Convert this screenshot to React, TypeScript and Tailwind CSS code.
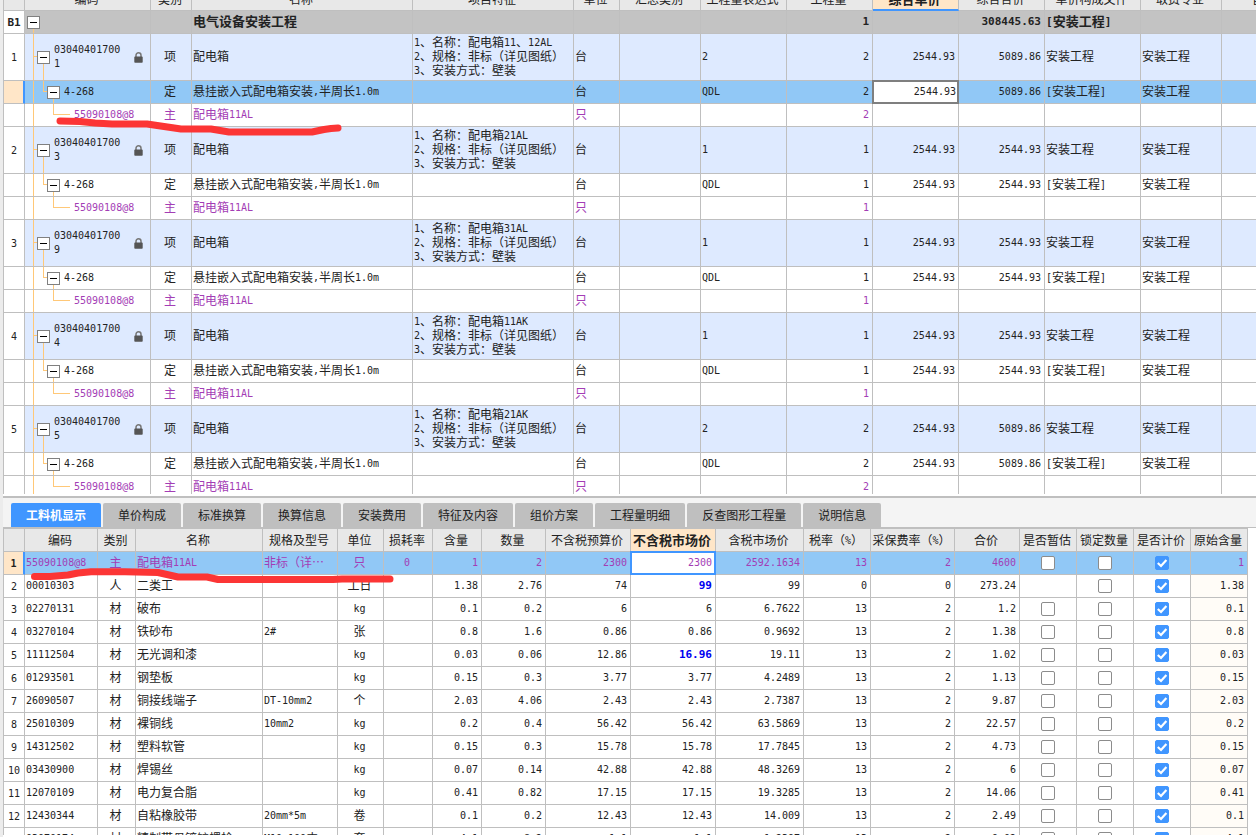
import React, { useState } from 'react';

type Kind = 'item' | 'quota' | 'main';

interface BudgetRow {
  no?: string;
  kind: Kind;
  code: string;
  type: string;
  name: string;
  feature?: string[];
  unit: string;
  expr?: string;
  qty: string;
  price?: string;
  total?: string;
  file?: string;
  major?: string;
  selected?: boolean;
}

// [no, code suffix, box name, qty, total price]
const boxes = [
  ['1', '1', '配电箱11、12AL', '2', '5089.86'],
  ['2', '3', '配电箱21AL', '1', '2544.93'],
  ['3', '9', '配电箱31AL', '1', '2544.93'],
  ['4', '4', '配电箱11AK', '1', '2544.93'],
  ['5', '5', '配电箱21AK', '2', '5089.86'],
];

const budgetRows: BudgetRow[] = boxes.flatMap(([no, suffix, box, qty, total], i): BudgetRow[] => [
  {
    no,
    kind: 'item',
    code: '03040401700' + suffix,
    type: '项',
    name: '配电箱',
    feature: ['1、名称：' + box, '2、规格：非标（详见图纸）', '3、安装方式：壁装'],
    unit: '台',
    expr: qty,
    qty,
    price: '2544.93',
    total,
    file: '安装工程',
    major: '安装工程',
  },
  {
    kind: 'quota',
    code: '4-268',
    type: '定',
    name: '悬挂嵌入式配电箱安装,半周长1.0m',
    unit: '台',
    expr: 'QDL',
    qty,
    price: '2544.93',
    total,
    file: '[安装工程]',
    major: '安装工程',
    selected: i === 0,
  },
  { kind: 'main', code: '55090108@8', type: '主', name: '配电箱11AL', unit: '只', qty },
]);

const budgetHead = ['', '编码', '类别', '名称', '项目特征', '单位', '汇总类别', '工程量表达式', '工程量', '综合单价', '综合合价', '单价构成文件', '取费专业'];

const tabs = ['工料机显示', '单价构成', '标准换算', '换算信息', '安装费用', '特征及内容', '组价方案', '工程量明细', '反查图形工程量', '说明信息'];

const materialHead = ['', '编码', '类别', '名称', '规格及型号', '单位', '损耗率', '含量', '数量', '不含税预算价', '不含税市场价', '含税市场价', '税率（%）', '采保费率（%）', '合价', '是否暂估', '锁定数量', '是否计价', '原始含量'];

// code, type, name, spec, unit, loss, content, qty, budget, market, taxed, tax rate, storage rate, total
const materials = [
  ['55090108@8', '主', '配电箱11AL', '非标（详…', '只', '0', '1', '2', '2300', '2300', '2592.1634', '13', '2', '4600'],
  ['00010303', '人', '二类工', '', '工日', '', '1.38', '2.76', '74', '99', '99', '0', '0', '273.24'],
  ['02270131', '材', '破布', '', 'kg', '', '0.1', '0.2', '6', '6', '6.7622', '13', '2', '1.2'],
  ['03270104', '材', '铁砂布', '2#', '张', '', '0.8', '1.6', '0.86', '0.86', '0.9692', '13', '2', '1.38'],
  ['11112504', '材', '无光调和漆', '', 'kg', '', '0.03', '0.06', '12.86', '16.96', '19.11', '13', '2', '1.02'],
  ['01293501', '材', '钢垫板', '', 'kg', '', '0.15', '0.3', '3.77', '3.77', '4.2489', '13', '2', '1.13'],
  ['26090507', '材', '铜接线端子', 'DT-10mm2', '个', '', '2.03', '4.06', '2.43', '2.43', '2.7387', '13', '2', '9.87'],
  ['25010309', '材', '裸铜线', '10mm2', 'kg', '', '0.2', '0.4', '56.42', '56.42', '63.5869', '13', '2', '22.57'],
  ['14312502', '材', '塑料软管', '', 'kg', '', '0.15', '0.3', '15.78', '15.78', '17.7845', '13', '2', '4.73'],
  ['03430900', '材', '焊锡丝', '', 'kg', '', '0.07', '0.14', '42.88', '42.88', '48.3269', '13', '2', '6'],
  ['12070109', '材', '电力复合脂', '', 'kg', '', '0.41', '0.82', '17.15', '17.15', '19.3285', '13', '2', '14.06'],
  ['12430344', '材', '自粘橡胶带', '20mm*5m', '卷', '', '0.1', '0.2', '12.43', '12.43', '14.009', '13', '2', '2.49'],
  ['03070174', '材', '精制带母镀锌螺栓', 'M10-100内', '套', '', '4.1', '8.2', '1.1', '1.1', '1.2397', '13', '2', '9.02'],
];

const cell = 'border-r border-b border-[#bfbfbf] p-0 whitespace-nowrap overflow-hidden';
const left = cell + ' pb-0.5 pl-px text-left';
const center = cell + ' pr-0.5 pb-0.5 text-center';
const right = cell + ' pr-[3px] pb-0.5 text-right';
const headCell = cell + ' pr-0.5 bg-[#e8e8e8] text-center font-normal';
const activeHead = cell + ' pr-0.5 bg-[#ffe6c8] text-center font-bold text-[13px]';

/** Latin runs go in the mono face, one half-width column per character */
function T({ children, big }: { children?: string; big?: boolean }) {
  const runs = (children ?? '').split(/([\x20-\x7e]+)/);
  return (
    <>
      {runs.map((run, i) =>
        i % 2 ? (
          <span key={i} className={`align-[1px] font-['DejaVu_Sans_Mono',monospace] ${big ? 'text-[11px] leading-[10px]' : 'text-[10px] leading-[10px]'}`}>{run}</span>
        ) : (
          run
        ),
      )}
    </>
  );
}

function Toggle() {
  return (
    <button aria-label="折叠" className="flex h-[13px] w-[13px] shrink-0 items-center justify-center border border-[#808080] bg-white">
      <span className="h-px w-[7px] bg-black" />
    </button>
  );
}

/** Toggle box with the connector that drops to its children */
function Node() {
  return (
    <div className="flex w-[13px] shrink-0 flex-col">
      <div className="flex-1" />
      <Toggle />
      <div className="ml-1.5 flex-1 border-l border-[#ffc878]" />
    </div>
  );
}

function LockIcon() {
  return (
    <svg aria-hidden="true" width="9" height="11" viewBox="0 0 9 11" className="mr-[7px] ml-auto shrink-0 self-center">
      <path d="M2 5.500V3.300a2.500 2.500 0 0 1 5 0v2.200" fill="none" stroke="#777" strokeWidth="1.500" />
      <rect x="0.300" y="4.600" width="8.400" height="6.200" rx="0.800" fill="#555" />
    </svg>
  );
}

function CodeCell({ row }: { row: BudgetRow }) {
  if (row.kind === 'item') {
    return (
      <div className="flex h-[46px]">
        <div className="w-2 shrink-0" />
        <div className="w-1 shrink-0 border-l border-[#ffc878]">
          <div className="h-1/2 border-b border-[#ffc878]" />
        </div>
        <Node />
        <span className="ml-1 w-[70px] self-center pb-0.5 leading-[14px] break-all whitespace-normal"><T>{row.code}</T></span>
        <LockIcon />
      </div>
    );
  }
  if (row.kind === 'quota') {
    return (
      <div className="flex h-[22px]">
        <div className="w-2 shrink-0" />
        <div className="w-2.5 shrink-0 border-l border-[#ffc878]" />
        <div className="h-1/2 w-1 shrink-0 border-b border-l border-[#ffc878]" />
        <Node />
        <span className="ml-1 self-center pb-0.5"><T>{row.code}</T></span>
      </div>
    );
  }
  return (
    <div className="flex h-[22px]">
      <div className="w-2 shrink-0" />
      <div className="w-5 shrink-0 border-l border-[#ffc878]" />
      <div className="h-1/2 w-[17px] shrink-0 border-b border-l border-[#ffc878]" />
      <span className="ml-1 self-center pb-0.5"><T>{row.code}</T></span>
    </div>
  );
}

function BudgetTable() {
  return (
    <table className="-mt-3 w-full table-fixed border-separate border-spacing-0 border-l border-[#bfbfbf]">
      <colgroup>
        <col className="w-[21px]" />
        <col className="w-[126px]" />
        <col className="w-[41px]" />
        <col className="w-[221px]" />
        <col className="w-[161px]" />
        <col className="w-[46px]" />
        <col className="w-[81px]" />
        <col className="w-[86px]" />
        <col className="w-[86px]" />
        <col className="w-[86px]" />
        <col className="w-[86px]" />
        <col className="w-[96px]" />
        <col className="w-[81px]" />
        <col />
      </colgroup>
      <thead>
        <tr className="h-[23px]">
          {budgetHead.map((h, i) => (
            <th key={i} className={h === '综合单价' ? activeHead + ' border-b-2 border-b-[#4096ff]' : headCell}>{h}</th>
          ))}
          <th className="overflow-hidden border-b border-[#bfbfbf] bg-[#e8e8e8] p-0 pl-[30px] text-left font-normal whitespace-nowrap">备注</th>
        </tr>
      </thead>
      <tbody>
        <tr className="h-[23px] bg-[#c3c3c3] text-[13px] font-bold">
          <td className={cell + ' bg-white text-center'}><T big>B1</T></td>
          <td className={cell}>
            <div className="flex h-[22px] pl-0.5"><Node /></div>
          </td>
          <td className={cell} />
          <td className={left}>电气设备安装工程</td>
          <td className={cell} />
          <td className={cell} />
          <td className={cell} />
          <td className={cell} />
          <td className={right}><T big>1</T></td>
          <td className={cell} />
          <td className={right}><T big>308445.63</T></td>
          <td className={left}><T big>[安装工程]</T></td>
          <td className={cell} />
          <td className="border-b border-[#bfbfbf]" />
        </tr>
        {budgetRows.map((row, i) => {
          const height = row.kind === 'item' ? 'h-[47px]' : 'h-[23px]';
          const bg = row.selected ? 'bg-[#91c8f6]' : row.kind === 'item' ? 'bg-[#deeaff]' : 'bg-white';
          const color = row.kind === 'main' ? 'text-[#a33db5]' : '';
          return (
            <tr key={i} className={`${height} ${bg} ${color}`}>
              <td className={cell + ' text-center ' + (row.selected ? 'border-r-2 border-r-[#4096ff] bg-[#ffe6c8]' : 'bg-white')}><T>{row.no}</T></td>
              <td className={cell}><CodeCell row={row} /></td>
              <td className={center}>{row.type}</td>
              <td className={left}><T>{row.name}</T></td>
              <td className={left}>
                {row.feature?.map(line => <div key={line}><T>{line}</T></div>)}
              </td>
              <td className={left}>{row.unit}</td>
              <td className={cell} />
              <td className={left}><T>{row.expr}</T></td>
              <td className={right}><T>{row.qty}</T></td>
              {row.selected ? (
                <td className="border-r border-b border-[#bfbfbf] p-0">
                  <input aria-label="综合单价" defaultValue={row.price} className="block h-[22px] w-full border border-[#7f7f7f] bg-white pr-px pb-0.5 text-right font-['DejaVu_Sans_Mono',monospace] text-[10px] outline-1 outline-[#7f7f7f]" />
                </td>
              ) : (
                <td className={right}><T>{row.price}</T></td>
              )}
              <td className={right}><T>{row.total}</T></td>
              <td className={left}><T>{row.file}</T></td>
              <td className={left}>{row.major}</td>
              <td className="border-b border-[#bfbfbf]" />
            </tr>
          );
        })}
      </tbody>
    </table>
  );
}

function Check({ label, checked }: { label: string; checked?: boolean }) {
  return (
    <span className="relative mx-auto block h-3.5 w-3.5">
      <input type="checkbox" aria-label={label} defaultChecked={checked} className="peer block h-3.5 w-3.5 appearance-none rounded-[2px] border border-[#8c8c8c] bg-white checked:border-[#4096ff] checked:bg-[#4096ff]" />
      <svg aria-hidden="true" viewBox="0 0 14 14" className="pointer-events-none absolute inset-0 hidden h-3.5 w-3.5 peer-checked:block">
        <path d="M2.800 7 6 10l5.400-6" fill="none" stroke="#fff" strokeWidth="2.200" />
      </svg>
    </span>
  );
}

function MaterialTable() {
  return (
    <table className="w-full table-fixed border-separate border-spacing-0 border-t border-l border-[#bfbfbf]">
      <colgroup>
        <col className="w-[21px]" />
        <col className="w-[73px]" />
        <col className="w-[38px]" />
        <col />
        <col className="w-[75px]" />
        <col className="w-[46px]" />
        <col className="w-[49px]" />
        <col className="w-[49px]" />
        <col className="w-[64px]" />
        <col className="w-[85px]" />
        <col className="w-[85px]" />
        <col className="w-[88px]" />
        <col className="w-[67px]" />
        <col className="w-[84px]" />
        <col className="w-[65px]" />
        <col className="w-[57px]" />
        <col className="w-[57px]" />
        <col className="w-[57px]" />
        <col className="w-[57px]" />
      </colgroup>
      <thead>
        <tr className="h-[23px]">
          {materialHead.map((h, i) => (
            <th key={i} className={h === '不含税市场价' ? activeHead : headCell}><T>{h}</T></th>
          ))}
        </tr>
      </thead>
      <tbody>
        {materials.map((m, i) => {
          const first = i === 0;
          return (
            <tr key={m[0]} className={'h-[23px] ' + (first ? 'bg-[#91c8f6] text-[#a33db5]' : 'bg-white')}>
              <td className={cell + ' text-center text-[#222] ' + (first ? 'border-r-2 border-r-[#4096ff] bg-[#ffe6c8] font-bold' : '')}><T>{String(i + 1)}</T></td>
              <td className={left}><T>{m[0]}</T></td>
              <td className={center}>{m[1]}</td>
              <td className={left}><T>{m[2]}</T></td>
              <td className={left}><T>{m[3]}</T></td>
              <td className={center}><T>{m[4]}</T></td>
              <td className={center}><T>{m[5]}</T></td>
              {m.slice(6, 9).map((v, j) => (
                <td key={j} className={right}><T>{v}</T></td>
              ))}
              {first ? (
                <td className="border-r border-b border-[#bfbfbf] p-0">
                  <input aria-label="不含税市场价" defaultValue={m[9]} className="block h-[22px] w-full border border-[#4096ff] bg-white pr-0.5 pb-0.5 text-right font-['DejaVu_Sans_Mono',monospace] text-[10px] outline-1 outline-[#4096ff]" />
                </td>
              ) : m[8] !== m[9] ? (
                <td className={right + ' font-bold text-[#0000f0]'}><T big>{m[9]}</T></td>
              ) : (
                <td className={right}><T>{m[9]}</T></td>
              )}
              {m.slice(10).map((v, j) => (
                <td key={j} className={right}><T>{v}</T></td>
              ))}
              <td className={cell}>{m[1] !== '人' && <Check label="是否暂估" />}</td>
              <td className={cell}><Check label="锁定数量" /></td>
              <td className={cell}><Check label="是否计价" checked /></td>
              <td className={right + (first ? '' : ' bg-[#fffcf7]')}><T>{m[6]}</T></td>
            </tr>
          );
        })}
      </tbody>
    </table>
  );
}

export default function App() {
  const [activeTab, setActiveTab] = useState(tabs[0]);

  return (
    <div className="relative flex h-screen flex-col overflow-hidden border-l-3 border-[#ececec] bg-white font-['Noto_Sans_CJK_SC',sans-serif] text-[12px] leading-[14px] text-[#222]">
      {/* Budget list */}
      <section className="mb-0.5 min-h-0 flex-1 overflow-hidden">
        <BudgetTable />
      </section>

      {/* Detail panel */}
      <section className="flex h-[341px] shrink-0 flex-col border-t-2 border-[#bfbfbf] pb-0.5">
        <nav className="flex h-[30px] shrink-0 items-end gap-0.5 border-b border-[#bfbfbf] bg-[#f4f4f4] pl-2">
          {tabs.map(tab => (
            <button
              key={tab}
              onClick={() => setActiveTab(tab)}
              className={`h-6 rounded-t-[2px] px-[15px] whitespace-nowrap ${activeTab === tab ? 'bg-[#4096ff] font-bold text-white' : 'bg-[#bfbfbf]'}`}
            >
              {tab}
            </button>
          ))}
        </nav>
        <div className="min-h-0 flex-1 overflow-hidden pr-2">
          <MaterialTable />
        </div>
      </section>

      {/* Red marker strokes */}
      <svg aria-hidden="true" width="400" height="600" className="pointer-events-none absolute top-0 -left-[3px]" fill="none" stroke="#fc3535" strokeWidth="7" strokeLinecap="round" strokeLinejoin="round">
        <path d="M60 121 80 121.500 95 123 112 124H147L164 126.500 181 129H211L229 132H312L324 129.500 331 128.500 338 128" />
        <path d="M34.500 576.500 50 576.500 68 575 78 573 91 571.700H125L158 572.500 178 577H207L218 579.500H333L342 579H390" />
      </svg>
    </div>
  );
}
